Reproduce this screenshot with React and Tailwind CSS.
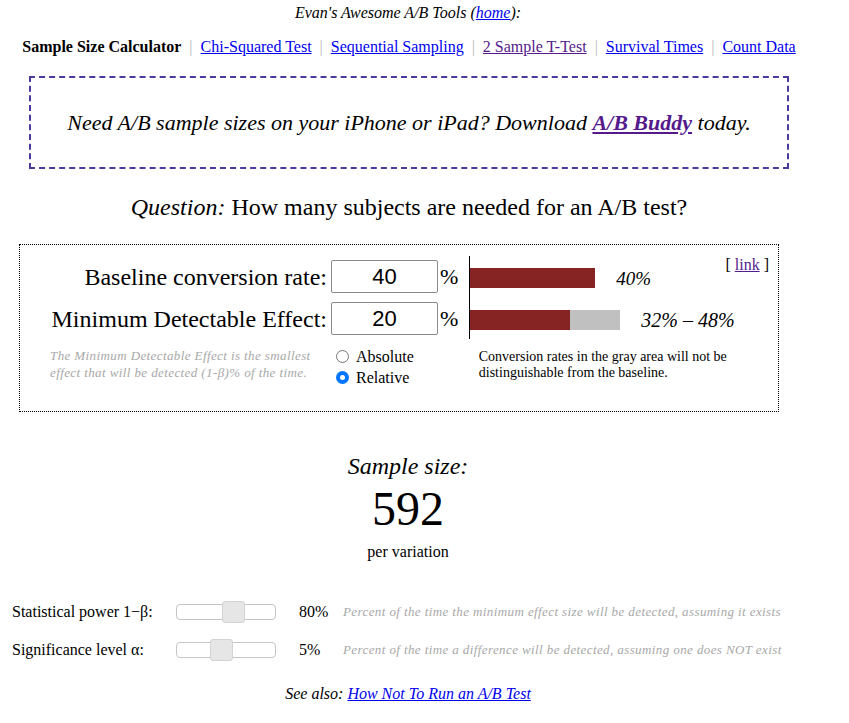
import React from "react";

const serif = { fontFamily: '"Liberation Serif", "Times New Roman", serif' };
const note = { fontFamily: '"Liberation Serif", "Times New Roman", serif', fontSize: "13px" };

function Slider({ thumbLeft }) {
  return (
    <div className="relative w-[100px] h-[16px] rounded-[4px] border border-[#c5c5c5] bg-white">
      <div
        className="absolute top-[-4px] w-[23px] h-[22px] rounded-[3px] border border-[#d3d3d3] bg-[#e6e6e6]"
        style={{ left: thumbLeft }}
      />
    </div>
  );
}

export default function App() {
  return (
    <div className="w-[849px] min-h-[723px] bg-white text-black" style={serif}>
      <div className="w-[800px] ml-[8px] flex flex-col">
        <div className="h-[26px] pt-[4px] text-center italic text-[16px] leading-[18px]">
          Evan's Awesome A/B Tools (<a href="#" className="text-[#0000ee] underline">home</a>):
        </div>
        <div className="mt-[11px] h-[20px] flex justify-center items-center text-[16px] leading-[18px] ml-[2px]">
          <b>Sample Size Calculator</b>
          <span className="text-[#bbb] mx-[8px]">|</span>
          <a href="#" className="text-[#0000ee] underline">Chi-Squared Test</a>
          <span className="text-[#bbb] mx-[8px]">|</span>
          <a href="#" className="text-[#0000ee] underline">Sequential Sampling</a>
          <span className="text-[#bbb] mx-[8px]">|</span>
          <a href="#" className="text-[#551a8b] underline">2 Sample T-Test</a>
          <span className="text-[#bbb] mx-[8px]">|</span>
          <a href="#" className="text-[#0000ee] underline">Survival Times</a>
          <span className="text-[#bbb] mx-[8px]">|</span>
          <a href="#" className="text-[#0000ee] underline">Count Data</a>
        </div>
        <div className="mt-[19px] ml-[21px] w-[760px] h-[93px] border-2 border-dashed border-[#4b3a9e] flex items-center justify-center italic text-[22px] leading-[26px]">
          <span>
            Need A/B sample sizes on your iPhone or iPad? Download{" "}
            <a href="#" className="text-[#551a8b] underline font-bold">A/B Buddy</a> today.
          </span>
        </div>
        <div className="mt-[24px] h-[32px] text-center text-[24px] leading-[28px] ml-[2px]">
          <i>Question:</i> How many subjects are needed for an A/B test?
        </div>
        <div className="mt-[19px] ml-[11px] w-[760px] h-[168px] border border-dotted border-black relative">
          <div className="absolute right-[9px] top-[11px] text-[16px] leading-[18px]">
            [ <a href="#" className="text-[#551a8b] underline">link</a> ]
          </div>
          <div className="flex mt-[11px]">
            <div className="w-[307px] flex flex-col items-end text-[24px] leading-[28px]">
              <div className="h-[33px] mt-[4px] flex items-center">Baseline conversion rate:</div>
              <div className="h-[33px] mt-[9px] flex items-center">Minimum Detectable Effect:</div>
            </div>
            <div className="flex flex-col ml-[4px] mt-[4px]">
              <div className="flex items-center h-[33px]">
                <div className="w-[107px] h-[33px] rounded-[2px] border border-[#8a8a8a] flex items-center justify-center text-[22px]" style={{ fontFamily: '"Liberation Sans", Arial, sans-serif' }}>40</div>
                <span className="ml-[2px] text-[22px]">%</span>
              </div>
              <div className="flex items-center h-[33px] mt-[9px]">
                <div className="w-[107px] h-[33px] rounded-[2px] border border-[#8a8a8a] flex items-center justify-center text-[22px]" style={{ fontFamily: '"Liberation Sans", Arial, sans-serif' }}>20</div>
                <span className="ml-[2px] text-[22px]">%</span>
              </div>
            </div>
            <div className="ml-[11px] w-[1px] h-[83px] bg-black" />
            <div className="flex flex-col">
              <div className="flex items-center mt-[12px] h-[20px]">
                <div className="w-[125px] h-[20px] bg-[#862424]" />
                <span className="ml-[21px] mt-[2px] italic text-[19px] leading-[20px]">40%</span>
              </div>
              <div className="flex items-center mt-[22px] h-[20px]">
                <div className="w-[100px] h-[20px] bg-[#862424]" />
                <div className="w-[50px] h-[20px] bg-[#c0c0c0]" />
                <span className="ml-[21px] italic text-[20px] leading-[20px]">32% – 48%</span>
              </div>
            </div>
          </div>
          <div className="flex mt-[7px]">
            <div className="ml-[30px] w-[280px] mt-[1px] italic leading-[17px] text-[#a8a8a8] tracking-[0.4px]" style={note}>
              The Minimum Detectable Effect is the smallest<br />effect that will be detected (1-β)% of the time.
            </div>
            <div className="ml-[6px] flex flex-col text-[16px] leading-[21px]">
              <label className="flex items-center">
                <span className="w-[13px] h-[13px] rounded-full border border-[#767676] bg-white mr-[7px]" />
                Absolute
              </label>
              <label className="flex items-center">
                <span className="w-[13px] h-[13px] rounded-full bg-[#0075ff] mr-[7px] flex items-center justify-center">
                  <span className="w-[5px] h-[5px] rounded-full bg-white" />
                </span>
                Relative
              </label>
            </div>
            <div className="ml-[65px] w-[270px] text-[14px] leading-[16px] mt-[3px]">
              Conversion rates in the gray area will not be distinguishable from the baseline.
            </div>
          </div>
        </div>
        <div className="mt-[40px] text-center italic text-[24px] leading-[28px]">Sample size:</div>
        <div className="text-center text-[48px] leading-[52px] mt-[3px]">592</div>
        <div className="text-center text-[16px] leading-[18px] mt-[8px]">per variation</div>
        <div className="mt-[40px] ml-[4px] flex items-center h-[22px] text-[16px]">
          <div className="w-[164px]">Statistical power 1−β:</div>
          <Slider thumbLeft={45} />
          <div className="ml-[23px] w-[44px]">80%</div>
          <div className="italic text-[#a8a8a8] tracking-[0.4px]" style={note}>
            Percent of the time the minimum effect size will be detected, assuming it exists
          </div>
        </div>
        <div className="mt-[16px] ml-[4px] flex items-center h-[22px] text-[16px]">
          <div className="w-[164px]">Significance level α:</div>
          <Slider thumbLeft={33} />
          <div className="ml-[23px] w-[44px]">5%</div>
          <div className="italic text-[#a8a8a8] tracking-[0.4px]" style={note}>
            Percent of the time a difference will be detected, assuming one does NOT exist
          </div>
        </div>
        <div className="mt-[24px] text-center italic text-[16px] leading-[18px]">
          See also: <a href="#" className="text-[#0000ee] underline">How Not To Run an A/B Test</a>
        </div>
      </div>
    </div>
  );
}
